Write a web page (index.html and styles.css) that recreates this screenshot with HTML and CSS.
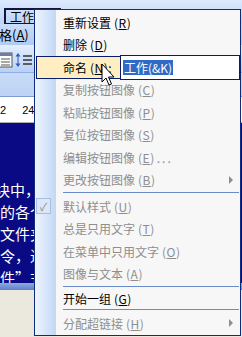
FILE: index.html
```html
<!DOCTYPE html>
<html lang="zh-CN">
<head>
<meta charset="utf-8">
<link rel="stylesheet" href="styles.css">
</head>
<body>
<div class="bg">
  <div class="tb1"><span class="btn-work">工作(<u>W</u>)</span></div>
  <div class="menubar"><span class="mb-item">格(<u>A</u>)</span></div>
  <div class="tb2">
    <svg class="tb-icons" width="36" height="20" viewBox="0 0 36 20">
      <rect x="1" y="3" width="13" height="14" fill="#fff" stroke="#555" stroke-width="1"/>
      <rect x="1" y="3" width="13" height="3" fill="#6a7fa8"/>
      <line x1="3" y1="9" x2="12" y2="9" stroke="#555"/>
      <line x1="3" y1="12" x2="12" y2="12" stroke="#555"/>
      <line x1="3" y1="15" x2="12" y2="15" stroke="#555"/>
      <path d="M20 3 L17.5 6.5 H22.5 Z M20 17 L17.5 13.5 H22.5 Z" fill="#2a58c8"/>
      <line x1="20" y1="6" x2="20" y2="14" stroke="#2a58c8"/>
      <line x1="25" y1="6" x2="34" y2="6" stroke="#333" stroke-width="1.5"/>
      <line x1="25" y1="10" x2="34" y2="10" stroke="#333" stroke-width="1.5"/>
      <line x1="25" y1="14" x2="34" y2="14" stroke="#333" stroke-width="1.5"/>
    </svg>
  </div>
  <div class="blue-area"></div>
  <div class="ruler"><span class="r1">2</span><span class="r2">24</span></div>
  <div class="doc">
    <p class="line shift">块中，</p>
    <p class="line">的各个</p>
    <p class="line">文件夹</p>
    <p class="line">令，进</p>
    <p class="line">件”式</p>
  </div>
  <div class="band"></div>
  <div class="status"></div>
</div>

<div class="menu">
  <div class="item">重新设置<span class="k">(<u>R</u>)</span></div>
  <div class="item">删除<span class="k">(<u>D</u>)</span></div>
  <div class="item active">
    <span class="act-label">命名<span class="k">(<u>N</u>):</span></span>
    <span class="input"><span class="sel">工作(&amp;K)</span></span>
  </div>
  <div class="item dis">复制按钮图像<span class="k">(<u>C</u>)</span></div>
  <div class="item dis">粘贴按钮图像<span class="k">(<u>P</u>)</span></div>
  <div class="item dis">复位按钮图像<span class="k">(<u>S</u>)</span></div>
  <div class="item dis">编辑按钮图像<span class="k">(<u>E</u>)</span><span class="dots">...</span></div>
  <div class="item dis sub">更改按钮图像<span class="k">(<u>B</u>)</span></div>
  <div class="sep"></div>
  <div class="item dis checked"><span class="check">✓</span>默认样式<span class="k">(<u>U</u>)</span></div>
  <div class="item dis">总是只用文字<span class="k">(<u>T</u>)</span></div>
  <div class="item dis">在菜单中只用文字<span class="k">(<u>O</u>)</span></div>
  <div class="item dis">图像与文本<span class="k">(<u>A</u>)</span></div>
  <div class="sep"></div>
  <div class="item short">开始一组<span class="k">(<u>G</u>)</span></div>
  <div class="sep"></div>
  <div class="item dis sub">分配超链接<span class="k">(<u>H</u>)</span></div>
</div>

<svg class="cursor" width="14" height="24" viewBox="0 0 14 24">
  <path d="M1 1 V19 L5 15 L8 22 L10.5 21 L7.5 14 H13 Z" fill="#fff" stroke="#000" stroke-width="1" stroke-linejoin="miter"/>
</svg>
</body>
</html>
```

FILE: styles.css
```css
* { box-sizing: border-box; }
html, body { margin: 0; padding: 0; }
body {
  width: 242px;
  height: 337px;
  overflow: hidden;
  position: relative;
  font-family: "Noto Sans CJK SC", "Noto Sans", sans-serif;
  background: #ece9d8;
}
u { text-decoration: underline; text-underline-offset: 1px; }

.bg {
  display: flex;
  flex-direction: column;
  width: 242px;
  height: 337px;
}
.tb1 {
  height: 24px;
  background: linear-gradient(#dce9fd, #bcd3f5);
  padding: 3px 0 0 4px;
}
.btn-work {
  display: inline-block;
  height: 17px;
  width: 57px;
  border: 2px solid #14143a;
  padding: 0 0 0 4px;
  font-size: 12px;
  line-height: 13px;
  color: #000;
  white-space: nowrap;
}
.menubar {
  height: 23px;
  background: linear-gradient(#c9dcf8, #b2cbf2);
  display: flex;
  align-items: center;
  font-size: 13px;
  color: #000;
  border-bottom: 2px solid #e3eefc;
}
.mb-item { margin-left: -1px; }
.tb2 {
  height: 26px;
  background: linear-gradient(#e1ecfd, #b9d0f4);
  display: flex;
  align-items: center;
  border-bottom: 1px solid #8fb0e6;
}
.tb-icons { display: block; margin-left: -2px; }
.blue-area {
  height: 24px;
  background: linear-gradient(#c7daf7, #bed3f5);
  border-bottom: 1px solid #7f9cd0;
}
.ruler {
  height: 26px;
  background: #fff;
  font-family: "Liberation Sans", sans-serif;
  font-size: 11px;
  color: #000;
  display: flex;
  align-items: center;
  border-bottom: 1px solid #b0b0b0;
}
.r2 { margin-left: 16px; }
.doc {
  height: 160px;
  background: #0a0a84;
  padding-top: 56px;
  overflow: hidden;
}
.line {
  margin: 0;
  font-size: 15px;
  line-height: 22px;
  height: 22px;
  color: #fff;
  white-space: nowrap;
}
.line.shift { margin-left: -5px; }
.band {
  height: 7px;
  background: linear-gradient(#8da9e0, #5f7fc8);
}
.status {
  flex: 1;
  background: #ebe8dd;
}

/* menu */
.menu {
  position: absolute;
  left: 34px;
  top: 9px;
  width: 207px;
  height: 327px;
  border: 1px solid #0f2c7c;
  background: linear-gradient(to right, #eef5ff 0, #c2d7f5 21px, #f7f7f7 21px);
  padding-top: 1px;
  display: flex;
  flex-direction: column;
  font-size: 12px;
  color: #000;
}
.item {
  height: 22.5px;
  flex: none;
  display: flex;
  align-items: center;
  padding-left: 28px;
  position: relative;
  white-space: nowrap;
}
.k {
  margin-left: 3px;
  letter-spacing: 0.5px;
}
.dots { letter-spacing: 2px; margin-left: 2px; }
.item.dis { color: #8e8e8e; }
.item.short { height: 19px; }
.item.sub::after {
  content: "";
  position: absolute;
  right: 7px;
  top: 50%;
  margin-top: -4px;
  border-left: 4px solid #8e8e8e;
  border-top: 4px solid transparent;
  border-bottom: 4px solid transparent;
}
.item.active {
  background: #ffeec2;
  border: 1px solid #0a1c6e;
  margin: 0 1px;
  padding-left: 26px;
  height: 22.5px;
}
.act-label { flex: none; }
.input {
  margin-left: auto;
  align-self: stretch;
  width: 120px;
  margin-top: -2px;
  margin-bottom: -2px;
  margin-right: -2px;
  background: #fff;
  border: 1px solid #0a1c6e;
  display: flex;
  align-items: center;
  padding-left: 2px;
}
.sel {
  background: #316ac5;
  color: #fff;
  line-height: 15px;
  padding: 0 1px;
}
.check {
  position: absolute;
  left: 1px;
  top: 50%;
  margin-top: -8px;
  width: 15px;
  height: 16px;
  border: 1px solid #a9bde2;
  background: #dbe6f6;
  color: #8e8e8e;
  font-size: 11px;
  line-height: 14px;
  text-align: center;
}
.sep {
  height: 4px;
  flex: none;
  margin-left: 21px;
  position: relative;
}
.sep::before {
  content: "";
  position: absolute;
  left: 7px;
  right: 1px;
  top: 1px;
  height: 1px;
  background: #6a8ccb;
}

.cursor {
  position: absolute;
  left: 101px;
  top: 63px;
}
```
